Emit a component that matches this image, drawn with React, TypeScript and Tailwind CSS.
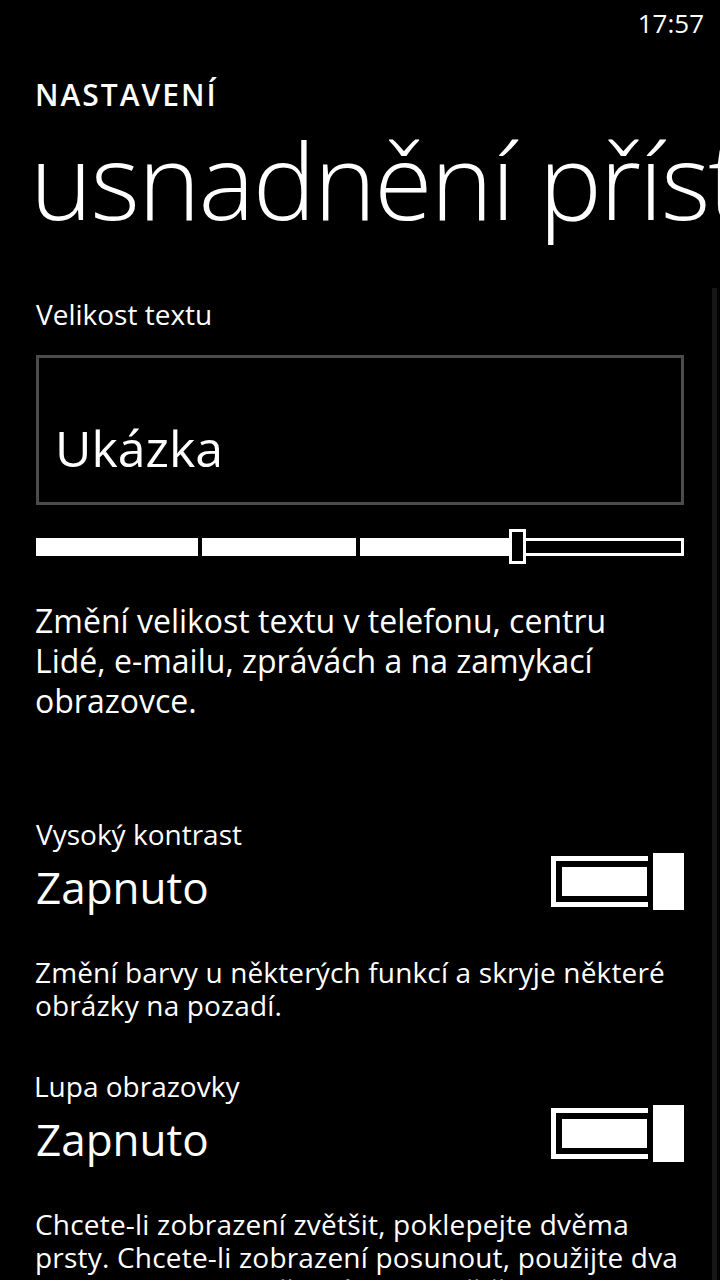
import React from "react";

const font = { fontFamily: '"Open Sans", "Noto Sans", sans-serif' };

function Toggle() {
  return (
    <div className="relative h-[57px] w-[133px] shrink-0">
      <div className="absolute left-0 top-[3px] h-[51px] w-[107px] border-[5px] border-white p-[6px]">
        <div className="h-full w-full bg-white" />
      </div>
      <div className="absolute right-0 top-0 h-[57px] w-[36px] border-l-[5px] border-black bg-white" />
    </div>
  );
}

function TextSlider() {
  return (
    <div className="flex h-[35px] w-[648px] items-center">
      <div className="h-[18px] w-[162px] bg-white" />
      <div className="w-[4px]" />
      <div className="h-[18px] w-[154px] bg-white" />
      <div className="w-[4px]" />
      <div className="h-[18px] w-[149px] bg-white" />
      <div className="h-[35px] w-[17px] border-[3px] border-white bg-black" />
      <div className="h-[18px] flex-1 border-[3px] border-l-0 border-white" />
    </div>
  );
}

function SwitchRow() {
  return (
    <div className="mt-[1px] flex h-[57px] w-[648px] justify-between">
      <div className="pt-[6px] text-[44px] leading-[57px]">Zapnuto</div>
      <Toggle />
    </div>
  );
}

export default function App() {
  return (
    <div
      className="relative h-[1280px] w-[720px] overflow-hidden bg-black text-white"
      style={font}
    >
      <div className="flex h-[46px] items-center justify-end pr-[16px] text-[26px] leading-[46px]">
        17:57
      </div>

      <div className="mt-[29px] pl-[35px] text-[30px] font-semibold leading-[40px] tracking-[2px]">
        NASTAVENÍ
      </div>
      <div className="mt-[4px] whitespace-nowrap pl-[30px] text-[106px] font-light leading-[120px] tracking-[-2px]">
        usnadnění přístupnost
      </div>

      <div className="pl-[36px]">
        <div className="mt-[57px] text-[28px] leading-[36px]">Velikost textu</div>
        <div className="mt-[23px] h-[150px] w-[648px] border-[3px] border-[#4b4b4b] pl-[16px] pt-[60px]">
          <div className="text-[50px] leading-[60px]">Ukázka</div>
        </div>
        <div className="mt-[24px]">
          <TextSlider />
        </div>
        <div className="-ml-[1px] mt-[37px] whitespace-nowrap text-[32px] leading-[40px]">
          <div>Změní velikost textu v telefonu, centru</div>
          <div>Lidé, e-mailu, zprávách a na zamykací</div>
          <div>obrazovce.</div>
        </div>

        <div className="mt-[95px] text-[28px] leading-[36px]">Vysoký kontrast</div>
        <SwitchRow />
        <div className="-ml-[1px] mt-[46px] whitespace-nowrap text-[28px] leading-[33px] tracking-[0.15px]">
          <div>Změní barvy u některých funkcí a skryje některé</div>
          <div>obrázky na pozadí.</div>
        </div>

        <div className="-ml-[2px] mt-[46px] text-[28px] leading-[36px]">Lupa obrazovky</div>
        <SwitchRow />
        <div className="-ml-[1px] mt-[46px] whitespace-nowrap text-[28px] leading-[33px] tracking-[0.2px]">
          <div>Chcete-li zobrazení zvětšit, poklepejte dvěma</div>
          <div>prsty. Chcete-li zobrazení posunout, použijte dva</div>
          <div>prsty. Chcete-li změnit úroveň zvětšení, poklepejte</div>
        </div>
      </div>

      <div className="absolute bottom-0 right-[3px] top-[288px] w-[5px] bg-[#161616]" />
    </div>
  );
}
